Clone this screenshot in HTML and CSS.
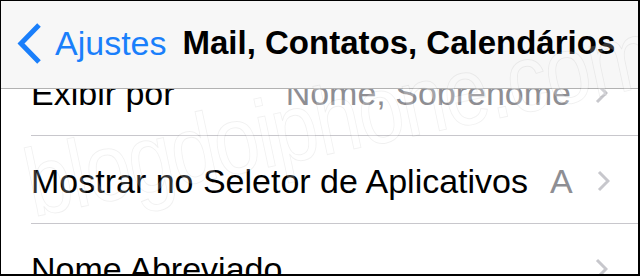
FILE: index.html
```html
<!DOCTYPE html>
<html lang="pt">
<head>
<meta charset="utf-8">
<link rel="stylesheet" href="styles.css">
</head>
<body>
<div class="frame">
  <header class="nav">
    <div class="back">
      <svg class="back-icon" width="26" height="43" viewBox="0 0 26 43"><polyline points="22,3 4,21.5 22,40" fill="none" stroke="#1a7ffb" stroke-width="5" stroke-linecap="butt"/></svg>
      <span class="back-label">Ajustes</span>
    </div>
    <h1 class="title">Mail, Contatos, Calendários</h1>
  </header>
  <main class="content">
    <ul class="list">
      <li class="row">
        <span class="label">Exibir por</span>
        <span class="value">Nome, Sobrenome</span>
        <svg class="chev" width="13" height="22" viewBox="0 0 13 22"><polyline points="2,2 11,11 2,20" fill="none" stroke="#c7c7cc" stroke-width="3"/></svg>
      </li>
      <li class="row">
        <span class="label">Mostrar no Seletor de Aplicativos</span>
        <span class="value value-clip">A</span>
        <svg class="chev" width="13" height="22" viewBox="0 0 13 22"><polyline points="2,2 11,11 2,20" fill="none" stroke="#c7c7cc" stroke-width="3"/></svg>
      </li>
      <li class="row">
        <span class="label">Nome Abreviado</span>
        <span class="value"></span>
        <svg class="chev" width="13" height="22" viewBox="0 0 13 22"><polyline points="2,2 11,11 2,20" fill="none" stroke="#c7c7cc" stroke-width="3"/></svg>
      </li>
    </ul>
  </main>
  <div class="watermark">blogdoiphone.com</div>
</div>
</body>
</html>
```
FILE: styles.css
```css
* { box-sizing: border-box; }
html, body { margin: 0; padding: 0; background: #000; }
body { width: 640px; height: 276px; overflow: hidden; font-family: "Liberation Sans", Arial, sans-serif; }
.frame {
  position: relative;
  width: 640px;
  height: 276px;
  border-top: 1px solid #000;
  border-left: 1px solid #000;
  border-right: 2px solid #000;
  border-bottom: 2px solid #000;
  background: #fff;
  display: flex;
  flex-direction: column;
  overflow: hidden;
}
.nav {
  position: relative;
  z-index: 2;
  height: 88px;
  flex: none;
  background: #f7f7f7;
  border-bottom: 1px solid #b2b2b2;
  display: flex;
  align-items: center;
  padding-left: 16px;
  padding-bottom: 4px;
}
.back { display: flex; align-items: center; color: #1a7ffb; }
.back-icon { display: block; margin-right: 12px; margin-top: 1px; }
.back-label { font-size: 34px; line-height: 1; }
.title {
  margin: 0 0 0 16px;
  font-size: 33px;
  font-weight: bold;
  line-height: 1;
  color: #000;
}
.content { flex: 1; overflow: hidden; position: relative; z-index: 1; }
.list { list-style: none; margin: -41px 0 0; padding: 0 0 0 30px; }
.row {
  height: 88px;
  display: flex;
  align-items: center;
  border-bottom: 1px solid #c8c7cc;
  padding-right: 30px;
  padding-top: 3px;
  font-size: 34px;
}
.label { color: #000; white-space: nowrap; }
.value { flex: 1; text-align: right; color: #8e8e93; white-space: nowrap; margin-right: 24px; }
.value-clip { text-align: left; margin-left: 22px; }
.chev { flex: none; display: block; }
.watermark {
  position: absolute;
  left: 14px;
  top: 130px;
  z-index: 3;
  font-family: "Liberation Sans", Arial, sans-serif;
  font-size: 96px;
  letter-spacing: -2px;
  color: rgba(255,255,255,0.2);
  -webkit-text-stroke: 1px rgba(0,0,0,0.06);
  transform: rotate(-12deg) scaleX(0.85);
  transform-origin: left top;
  white-space: nowrap;
  pointer-events: none;
}
```
